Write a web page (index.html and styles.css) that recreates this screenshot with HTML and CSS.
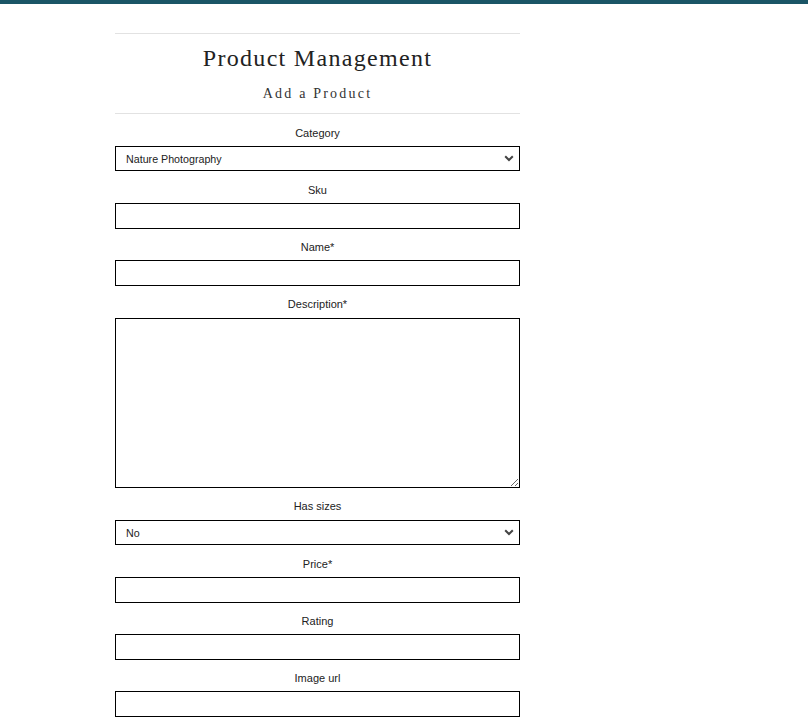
FILE: index.html
```html
<!DOCTYPE html>
<html lang="en">
<head>
<meta charset="utf-8">
<title>Product Management</title>
<link rel="stylesheet" href="styles.css">
</head>
<body>
<div class="topbar"></div>
<main class="page">
  <header class="page-header">
    <h1 class="title">Product Management</h1>
    <h2 class="subtitle">Add a Product</h2>
  </header>
  <form class="product-form">
    <div class="field field-select">
      <label class="label" for="category">Category</label>
      <div class="select-wrap">
        <select id="category" class="control select">
          <option>Nature Photography</option>
        </select>
        <svg class="chevron" width="10" height="7" viewBox="0 0 10 7"><path d="M1.2 1.2 L5 5 L8.8 1.2" fill="none" stroke="#444" stroke-width="2"/></svg>
      </div>
    </div>
    <div class="field">
      <label class="label" for="sku">Sku</label>
      <input id="sku" class="control" type="text">
    </div>
    <div class="field">
      <label class="label" for="name">Name*</label>
      <input id="name" class="control" type="text">
    </div>
    <div class="field">
      <label class="label label-tall" for="description">Description*</label>
      <textarea id="description" class="control textarea"></textarea>
    </div>
    <div class="field field-select">
      <label class="label label-tall" for="sizes">Has sizes</label>
      <div class="select-wrap">
        <select id="sizes" class="control select">
          <option>No</option>
        </select>
        <svg class="chevron" width="10" height="7" viewBox="0 0 10 7"><path d="M1.2 1.2 L5 5 L8.8 1.2" fill="none" stroke="#444" stroke-width="2"/></svg>
      </div>
    </div>
    <div class="field">
      <label class="label" for="price">Price*</label>
      <input id="price" class="control" type="text">
    </div>
    <div class="field">
      <label class="label" for="rating">Rating</label>
      <input id="rating" class="control" type="text">
    </div>
    <div class="field">
      <label class="label" for="image">Image url</label>
      <input id="image" class="control" type="text">
    </div>
  </form>
</main>
</body>
</html>
```
FILE: styles.css
```css
* { box-sizing: border-box; }
html, body { margin: 0; padding: 0; background: #fff; }
body { font-family: "Liberation Sans", Arial, sans-serif; color: #222; }
.topbar { height: 4px; background: #1a5566; }
.page { width: 405px; margin-left: 115px; padding-top: 29px; }
.page-header {
  border-top: 1px solid #e2e2e2;
  border-bottom: 1px solid #e2e2e2;
  text-align: center;
  padding: 10px 0 11px;
}
.title {
  margin: 0;
  font-family: "Liberation Serif", "Times New Roman", serif;
  font-weight: normal;
  font-size: 24px;
  line-height: 28px;
  letter-spacing: 1.3px;
  color: #222;
}
.subtitle {
  margin: 14px 0 0;
  font-family: "Liberation Serif", "Times New Roman", serif;
  font-weight: normal;
  font-size: 14px;
  line-height: 16px;
  letter-spacing: 2.2px;
  color: #333;
}
.product-form { padding-top: 12px; }
.field { margin-bottom: 11px; }
.field-select { margin-bottom: 12px; }
.label {
  display: block;
  text-align: center;
  font-size: 11px;
  line-height: 14px;
  margin-bottom: 6px;
  color: #222;
}
.label-tall { margin-bottom: 7px; }
.control {
  display: block;
  width: 100%;
  height: 26px;
  border: 1px solid #000;
  border-radius: 0;
  background: #fff;
  font-family: "Liberation Sans", Arial, sans-serif;
  font-size: 10.7px;
  color: #222;
  padding: 0 10px;
  margin: 0;
  outline: none;
}
.select-wrap { position: relative; }
.select { appearance: none; -webkit-appearance: none; height: 25px; }
.chevron { position: absolute; right: 6px; top: 9px; pointer-events: none; }
.textarea { height: 170px; resize: vertical; padding: 4px 10px; }
```
